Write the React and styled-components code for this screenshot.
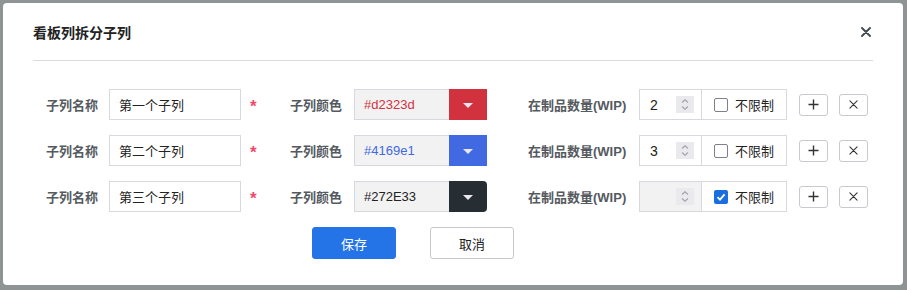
import React, { useState } from 'react';
import styled, { createGlobalStyle, css } from 'styled-components';

const GlobalStyle = createGlobalStyle`
  html, body {
    margin: 0;
    padding: 0;
    background: #8e9393;
  }
  body {
    font-family: "Liberation Sans", "Noto Sans CJK SC", sans-serif;
  }
  * { box-sizing: border-box; }
`;

const Overlay = styled.div`
  width: 907px;
  height: 290px;
  padding: 3px 4px 5px 3px;
`;

const Dialog = styled.div`
  width: 900px;
  height: 282px;
  background: #ffffff;
  border-radius: 4px;
  padding: 0 30px;
  display: flex;
  flex-direction: column;
`;

const Header = styled.div`
  height: 58px;
  display: flex;
  align-items: center;
  justify-content: space-between;
  border-bottom: 1px solid #d9d9e0;
  padding-top: 1px;
`;

const Title = styled.div`
  font-size: 14px;
  font-weight: bold;
  color: #222;
`;

const CloseButton = styled.button`
  border: none;
  background: none;
  padding: 0;
  width: 14px;
  height: 14px;
  cursor: pointer;
  display: flex;
  align-items: center;
  justify-content: center;
`;

const Body = styled.div`
  padding-top: 28px;
  display: flex;
  flex-direction: column;
  gap: 15px;
`;

const Row = styled.div`
  display: flex;
  align-items: center;
  height: 31px;
  padding-left: 13px;
`;

const Label = styled.div`
  width: ${p => p.$w}px;
  margin-left: ${p => p.$ml || 0}px;
  margin-right: ${p => p.$mr}px;
  font-size: 13px;
  font-weight: bold;
  color: #555a5f;
  white-space: nowrap;
`;

const TextInput = styled.input`
  width: 132px;
  height: 31px;
  border: 1px solid #d6d9e0;
  padding: 0 9px;
  font-family: inherit;
  font-size: 13px;
  color: #222;
  outline: none;
`;

const Required = styled.span`
  width: 8px;
  margin-left: 9px;
  color: #f0486c;
  font-size: 17px;
  font-weight: bold;
  line-height: 1;
  padding-top: 4px;
`;

const ColorField = styled.div`
  display: flex;
  width: 133px;
  height: 31px;
`;

const ColorText = styled.div`
  flex: 1;
  background: #f2f2f3;
  border: 1px solid #d6d9e0;
  border-right: none;
  display: flex;
  align-items: center;
  padding-left: 9px;
  font-size: 13px;
  color: ${p => p.$color};
`;

const Swatch = styled.div`
  width: 38px;
  background: ${p => p.$color};
  display: flex;
  align-items: center;
  justify-content: center;
  ${p => p.$rounded && css`
    border-radius: 0 4px 4px 0;
  `}
`;

const Caret = styled.span`
  width: 0;
  height: 0;
  border-left: 5px solid transparent;
  border-right: 5px solid transparent;
  border-top: 5px solid #e8e8ee;
  margin-top: 1px;
`;

const WipGroup = styled.div`
  display: flex;
  height: 31px;
  border: 1px solid #d6d9e0;
`;

const NumberBox = styled.div`
  width: 62px;
  display: flex;
  align-items: center;
  justify-content: space-between;
  padding: 0 7px 0 10px;
  font-size: 14px;
  color: #222;
  border-right: 1px solid #d6d9e0;
  background: ${p => (p.$disabled ? '#f2f2f3' : '#fff')};
`;

const Spinner = styled.div`
  width: 18px;
  height: 17px;
  background: #e9e9ee;
  display: flex;
  align-items: center;
  justify-content: center;
`;

const CheckCell = styled.label`
  width: 84px;
  display: flex;
  align-items: center;
  padding-left: 12px;
  gap: 7px;
  font-size: 13px;
  color: #222;
`;

const CheckBox = styled.span`
  width: 14px;
  height: 14px;
  border-radius: 2px;
  display: flex;
  align-items: center;
  justify-content: center;
  ${p =>
    p.$checked
      ? css`
          background: #1a6fe0;
        `
      : css`
          border: 1.5px solid #80808c;
        `}
`;

const SmallButton = styled.button`
  width: 29px;
  height: 22px;
  margin-left: ${p => p.$ml}px;
  border: 1px solid #c9c9cf;
  border-radius: 3px;
  background: #fff;
  padding: 0;
  display: flex;
  align-items: center;
  justify-content: center;
  cursor: pointer;
`;

const Footer = styled.div`
  display: flex;
  gap: 34px;
  padding-left: 279px;
  margin-top: 15px;
`;

const Button = styled.button`
  width: 84px;
  height: 32px;
  border-radius: 3px;
  font-family: inherit;
  font-size: 13px;
  cursor: pointer;
  ${p =>
    p.$primary
      ? css`
          background: #2474e8;
          border: 1px solid #2474e8;
          color: #fff;
        `
      : css`
          background: #fff;
          border: 1px solid #c6c6cc;
          color: #222;
        `}
`;

const rows = [
  { name: '第一个子列', color: '#d2323d', text: '#d2323d', wip: '2', unlimited: false },
  { name: '第二个子列', color: '#4169e1', text: '#4169e1', wip: '3', unlimited: false },
  { name: '第三个子列', color: '#272E33', text: '#222', wip: '', unlimited: true, rounded: true },
];

const Cross = ({ size, stroke, color }) => (
  <svg width={size} height={size} viewBox="0 0 10 10">
    <path d="M1 1L9 9M9 1L1 9" stroke={color} strokeWidth={stroke} strokeLinecap="round" />
  </svg>
);

const Plus = () => (
  <svg width="11" height="11" viewBox="0 0 11 11">
    <path d="M5.5 0.5V10.5M0.5 5.5H10.5" stroke="#333" strokeWidth="1.4" />
  </svg>
);

const Chevrons = () => (
  <svg width="10" height="13" viewBox="0 0 10 13">
    <path d="M2 4.5L5 1.8L8 4.5M2 8.5L5 11.2L8 8.5" stroke="#a2a2ab" strokeWidth="1.1" fill="none" />
  </svg>
);

const Tick = () => (
  <svg width="10" height="10" viewBox="0 0 10 10">
    <path d="M1.5 5.2L4 7.6L8.6 2.4" stroke="#fff" strokeWidth="1.8" fill="none" />
  </svg>
);

export default function App() {
  const [items] = useState(rows);
  return (
    <>
      <GlobalStyle />
      <Overlay>
        <Dialog>
          <Header>
            <Title>看板列拆分子列</Title>
            <CloseButton>
              <Cross size={10} stroke={1.8} color="#3d4750" />
            </CloseButton>
          </Header>
          <Body>
            {items.map((r, i) => (
              <Row key={i}>
                <Label $w={51} $mr={12}>子列名称</Label>
                <TextInput defaultValue={r.name} />
                <Required>*</Required>
                <Label $w={51} $ml={32} $mr={13}>子列颜色</Label>
                <ColorField>
                  <ColorText $color={r.text}>{r.color}</ColorText>
                  <Swatch $color={r.color} $rounded={r.rounded}>
                    <Caret />
                  </Swatch>
                </ColorField>
                <Label $w={99} $ml={41} $mr={12}>在制品数量(WIP)</Label>
                <WipGroup>
                  <NumberBox $disabled={r.unlimited}>
                    <span>{r.wip}</span>
                    <Spinner>
                      <Chevrons />
                    </Spinner>
                  </NumberBox>
                  <CheckCell>
                    <CheckBox $checked={r.unlimited}>{r.unlimited && <Tick />}</CheckBox>
                    不限制
                  </CheckCell>
                </WipGroup>
                <SmallButton $ml={12}>
                  <Plus />
                </SmallButton>
                <SmallButton $ml={11}>
                  <Cross size={9} stroke={1.2} color="#333" />
                </SmallButton>
              </Row>
            ))}
          </Body>
          <Footer>
            <Button $primary>保存</Button>
            <Button>取消</Button>
          </Footer>
        </Dialog>
      </Overlay>
    </>
  );
}
